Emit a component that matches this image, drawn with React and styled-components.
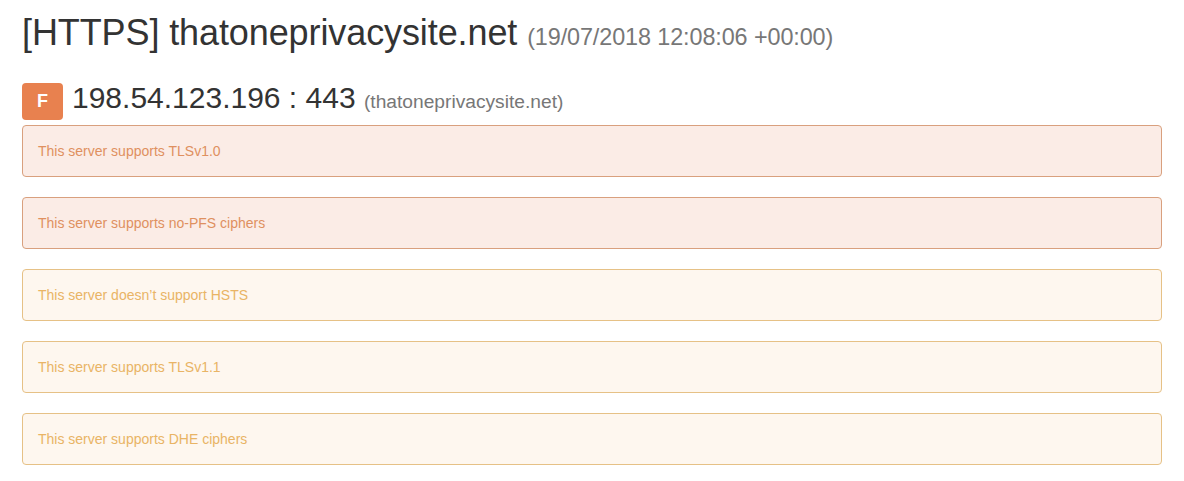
import styled, { createGlobalStyle } from "styled-components";

const GlobalStyle = createGlobalStyle`
  body {
    margin: 0;
    background: #fff;
    font-family: "Liberation Sans", Arial, sans-serif;
    color: #333;
  }
`;

const Page = styled.div`
  padding: 13px 22px 0 22px;
  width: 1140px;
`;

const Title = styled.h1`
  margin: 0;
  font-size: 36px;
  font-weight: 400;
  line-height: 39.6px;
  color: #333;
  letter-spacing: -0.1px;

  small {
    font-size: 65%;
    color: #777;
  }
`;

const HostRow = styled.div`
  display: flex;
  align-items: center;
  gap: 9px;
  margin-top: 25px;
  height: 37px;
`;

const Grade = styled.span`
  display: flex;
  align-items: center;
  justify-content: center;
  width: 41px;
  height: 37px;
  border-radius: 4px;
  background: ${(p) => p.color};
  color: #fff;
  font-size: 18px;
  font-weight: 700;
`;

const Host = styled.h2`
  margin: 0;
  padding-bottom: 3px;
  font-size: 30px;
  font-weight: 400;
  line-height: 33px;
  color: #333;

  small {
    font-size: 64%;
    color: #777;
  }
`;

const List = styled.div`
  margin-top: 5px;
`;

const Alert = styled.div`
  box-sizing: border-box;
  height: 52px;
  padding: 15px;
  margin-bottom: 20px;
  border: 1px solid ${(p) => (p.level === "danger" ? "#d9a07e" : "#e6c186")};
  border-radius: 4px;
  background: ${(p) => (p.level === "danger" ? "#fbece6" : "#fef7ef")};
  color: ${(p) => (p.level === "danger" ? "#df9060" : "#e9b465")};
  font-size: 14px;
  line-height: 20px;
`;

const findings = [
  { level: "danger", text: "This server supports TLSv1.0" },
  { level: "danger", text: "This server supports no-PFS ciphers" },
  { level: "warning", text: "This server doesn’t support HSTS" },
  { level: "warning", text: "This server supports TLSv1.1" },
  { level: "warning", text: "This server supports DHE ciphers" },
];

export default function App() {
  return (
    <>
      <GlobalStyle />
      <Page>
        <Title>
          [HTTPS] thatoneprivacysite.net <small>(19/07/2018 12:08:06 +00:00)</small>
        </Title>
        <HostRow>
          <Grade color="#e8814f">F</Grade>
          <Host>
            198.54.123.196 : 443 <small>(thatoneprivacysite.net)</small>
          </Host>
        </HostRow>
        <List>
          {findings.map((f) => (
            <Alert key={f.text} level={f.level}>
              {f.text}
            </Alert>
          ))}
        </List>
      </Page>
    </>
  );
}
